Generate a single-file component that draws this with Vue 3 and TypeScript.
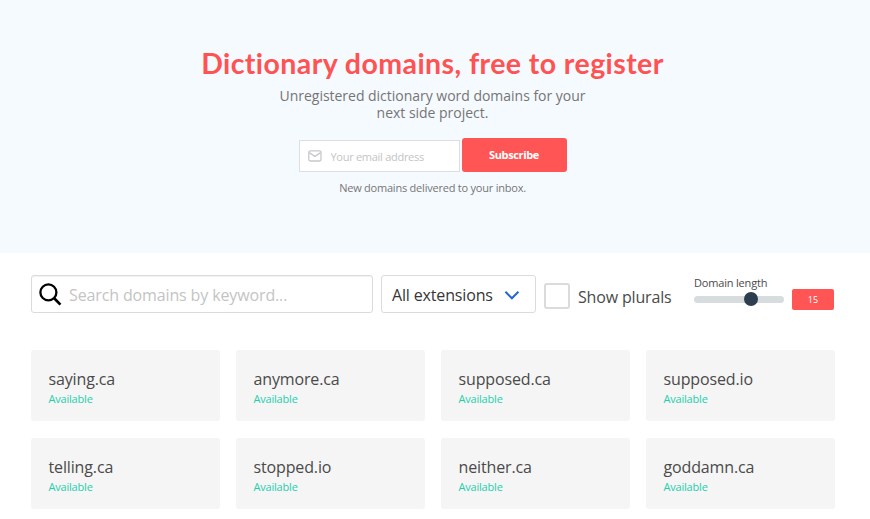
<script setup lang="ts">
import { ref } from 'vue'

const email = ref('')
const keyword = ref('')
const plurals = ref(false)
const maxLength = ref(15)

const domains: string[] = [
  'saying.ca',
  'anymore.ca',
  'supposed.ca',
  'supposed.io',
  'telling.ca',
  'stopped.io',
  'neither.ca',
  'goddamn.ca',
]
</script>

<template>
  <div class="page">
    <header class="hero">
      <h1>Dictionary domains, free to register</h1>
      <p class="lead">Unregistered dictionary word domains for your<br />next side project.</p>
      <form class="signup" @submit.prevent>
        <label class="email">
          <svg width="14" height="12" viewBox="0 0 14 12" fill="none" stroke="#c6c8ca" stroke-width="1.3">
            <rect x="0.8" y="0.8" width="12.2" height="10.2" rx="1.4" />
            <path d="M1.2 2.6 6.9 6.4l5.7-3.8" />
          </svg>
          <input v-model="email" type="text" placeholder="Your email address" />
        </label>
        <button class="subscribe">Subscribe</button>
      </form>
      <p class="note">New domains delivered to your inbox.</p>
    </header>

    <section class="filters">
      <label class="search">
        <svg width="24" height="24" viewBox="0 0 24 24" fill="none" stroke="#000">
          <circle cx="9.4" cy="9.4" r="8" stroke-width="2.3" />
          <path d="m15.2 15.2 6.2 6.4" stroke-width="2.7" />
        </svg>
        <input v-model="keyword" type="text" placeholder="Search domains by keyword..." />
      </label>
      <div class="extensions">
        <span>All extensions</span>
        <svg width="16" height="10" viewBox="0 0 16 10" fill="none" stroke="#2366d1" stroke-width="2">
          <path d="m1.4 1.8 6.5 6.5 6.5-6.5" />
        </svg>
      </div>
      <label class="plurals">
        <input v-model="plurals" type="checkbox" />
        <span>Show plurals</span>
      </label>
      <div class="length">
        <span class="length-label">Domain length</span>
        <input v-model.number="maxLength" type="range" min="3" max="21.4" step="any" />
      </div>
      <output class="count">{{ Math.round(maxLength) }}</output>
    </section>

    <main class="grid">
      <article v-for="domain in domains" :key="domain" class="card">
        <h2>{{ domain }}</h2>
        <p>Available</p>
      </article>
    </main>
  </div>
</template>

<style>
body {
  overflow: hidden;
  background: #fff;
}
</style>

<style scoped>
.page {
  box-sizing: border-box;
  width: 870px;
  height: 519px;
  overflow: hidden;
  font-family: 'Segoe UI', 'Open Sans', 'Noto Sans', sans-serif;
  color: #363636;
}
.page *,
.page *::before {
  box-sizing: border-box;
}
h1,
h2,
p {
  margin: 0;
  white-space: nowrap;
}
input,
button {
  font: inherit;
}
.hero {
  height: 253px;
  padding: 45px 5px 0 0;
  background: #f5faff;
  display: flex;
  flex-direction: column;
  align-items: center;
}
h1 {
  height: 42px;
  font: 700 28.5px/36px Lato, sans-serif;
  font-variant-ligatures: none;
  letter-spacing: 0.42px;
  color: #ff5252;
}
.lead {
  font: 14px/17px 'Open Sans', sans-serif;
  letter-spacing: -0.02px;
  color: #757575;
  text-align: center;
}
.signup {
  display: flex;
  gap: 2px;
  margin-top: 17px;
  align-items: flex-end;
  height: 34px;
}
.email {
  display: flex;
  align-items: center;
  width: 161px;
  height: 32px;
  padding-left: 8px;
  border: 1px solid #dbdfe3;
  background: #fff;
}
.email svg {
  margin-bottom: 1px;
}
.email input {
  width: 125px;
  margin-left: 9px;
  padding: 0;
  border: 0;
  outline: 0;
  font-size: 11px;
  letter-spacing: -0.28px;
  background: none;
}
input::placeholder {
  color: #c4c4c4;
  opacity: 1;
}
.subscribe {
  width: 105px;
  height: 34px;
  padding: 0 0 1px;
  border: 0;
  border-radius: 3px;
  background: #ff5555;
  color: #fff;
  font-size: 11px;
  font-weight: 700;
  letter-spacing: -0.35px;
}
.note {
  margin-top: 8px;
  font-size: 11px;
  line-height: 16px;
  letter-spacing: -0.22px;
  color: #757575;
}
.filters {
  display: flex;
  height: 60px;
  padding: 22px 0 0 31px;
}
.search {
  display: flex;
  align-items: center;
  width: 342px;
  height: 38px;
  padding-left: 7px;
  border: 1px solid #dbdbdb;
  border-radius: 3px;
  box-shadow: inset 0 1px 1px rgba(10, 10, 10, 0.06);
}
.search svg {
  margin-top: 2px;
}
.search input {
  width: 290px;
  margin-left: 6px;
  padding: 2px 0 0;
  border: 0;
  outline: 0;
  background: none;
  font-size: 16px;
  letter-spacing: -0.13px;
}
.extensions {
  display: flex;
  align-items: center;
  justify-content: space-between;
  width: 155px;
  height: 38px;
  margin-left: 8px;
  padding: 0 15px 0 10px;
  border: 1px solid #dbdbdb;
  border-radius: 3px;
  font-size: 16px;
  letter-spacing: -0.15px;
  white-space: nowrap;
}
.extensions span {
  padding-top: 2px;
}
.extensions svg {
  margin-top: 2px;
}
.plurals {
  display: flex;
  align-items: center;
  height: 26px;
  margin: 8px 0 0 8px;
  font-size: 16px;
  letter-spacing: -0.17px;
  white-space: nowrap;
  color: #4a4a4a;
}
.plurals input {
  appearance: none;
  width: 26px;
  height: 26px;
  margin: 0 8px 0 0;
  border: 2px solid #dbdbdb;
  border-radius: 3px;
  background: #fff;
}
.plurals span {
  width: 94px;
  padding-top: 2px;
}
.length {
  display: flex;
  flex-direction: column;
  width: 90px;
  margin-left: 22px;
}
.length-label {
  height: 17px;
  font-size: 11px;
  line-height: 15px;
  letter-spacing: -0.18px;
  white-space: nowrap;
  color: #4a4a4a;
}
.length input {
  appearance: none;
  width: 90px;
  height: 14px;
  margin: 0;
  background: none;
}
.length input::-webkit-slider-runnable-track {
  height: 7px;
  border-radius: 4px;
  background: #d7dcdf;
}
.length input::-webkit-slider-thumb {
  appearance: none;
  width: 14px;
  height: 14px;
  margin-top: -3.5px;
  border-radius: 50%;
  background: #2c3e50;
}
.count {
  width: 42px;
  height: 21px;
  margin: 14px 0 0 8px;
  border-radius: 2px;
  background: #ff5555;
  color: #fff;
  font-size: 9px;
  line-height: 21px;
  text-align: center;
}
.grid {
  display: grid;
  grid-template-columns: repeat(4, 188.5px);
  grid-auto-rows: 71px;
  gap: 17px 16.5px;
  padding: 37px 0 0 31px;
}
.card {
  padding: 18px 17.5px 0;
  border-radius: 3px;
  background: #f5f5f5;
}
.card h2 {
  font-size: 16px;
  line-height: 22px;
  font-weight: 400;
  letter-spacing: -0.14px;
  color: #4a4a4a;
}
.card p {
  font-size: 11px;
  line-height: 17px;
  letter-spacing: -0.2px;
  color: #1fcfad;
}
</style>
